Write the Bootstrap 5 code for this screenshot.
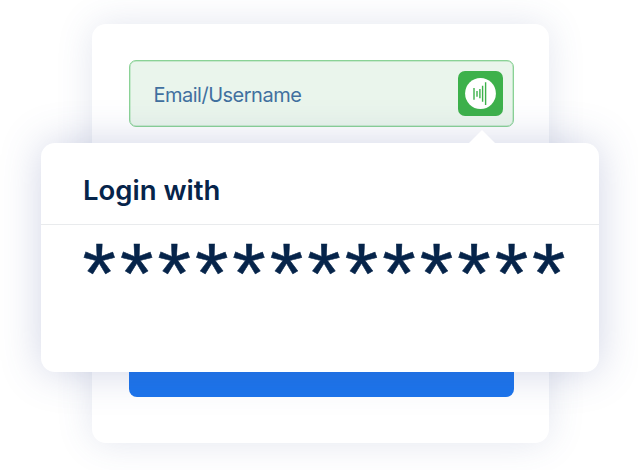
<!DOCTYPE html>
<html lang="en">
<head>
<meta charset="utf-8">
<meta name="viewport" content="width=device-width, initial-scale=1">
<title>Login</title>
<link href="https://cdn.jsdelivr.net/npm/bootstrap@5.3.0/dist/css/bootstrap.min.css" rel="stylesheet">
<style>
body { font-family: Inter, "Liberation Sans", sans-serif; height: 470px; overflow: hidden; padding: 24px 89.5px 0 92px; }
.login-panel { height: 419px; padding: 36px 35px 46px 36.5px; border-radius: 14px; box-shadow: 0 0 36px rgba(70,90,150,.15); }
.user-field { height: 67px; padding: 0 10px 0 24px; border: 1px solid #8ad296; box-shadow: inset 0 0 0 .5px #a5dcae; border-radius: 7px; background: #eaf5ec; }
.user-label { font-size: 20px; letter-spacing: -.5px; color: #41709f; line-height: 1; padding-top: 2px; }
.submit-btn { height: 60px; border: 0; border-radius: 8px; background: #1b74ec; }
.pass-popup { left: 40.5px; top: 142.5px; width: 558.5px; height: 229px; border-radius: 14px; box-shadow: 0 0 40px rgba(70,88,155,.25); color: #06244a; }
.pass-popup::before { content: ""; position: absolute; left: 427.5px; top: -13px; border: 14px solid transparent; border-top: 0; border-bottom: 14px solid #fff; }
.popup-title { height: 82px; padding: 16px 42px 0 42.5px; border-bottom: 1.5px solid #e9ebed; }
.popup-title h1 { font-size: 27.5px; font-weight: 600; letter-spacing: 0; line-height: 1; }
.masked { padding: 5px 0 0 42px; font: 400 86px/1 "Liberation Sans", sans-serif; letter-spacing: 4px; -webkit-text-stroke: .5px #06244a; }
</style>
</head>
<body class="bg-white">
<main class="login-panel bg-white d-flex flex-column justify-content-between">
  <div class="user-field d-flex align-items-center justify-content-between">
    <span class="user-label">Email/Username</span>
    <svg width="45" height="45" viewBox="0 0 45 45" role="img" aria-label="Autofill">
      <rect width="45" height="45" rx="7" fill="#3db14b"/>
      <circle cx="22.5" cy="22.5" r="15.4" fill="#fff"/>
      <path d="M16 17v11.7M19 20v5.8M21.9 18v9.3M24.6 14.8v16M27.6 11.3v22.8" stroke="#3db14b" stroke-width="1.4"/>
    </svg>
  </div>
  <button class="submit-btn w-100" type="submit" aria-label="Log in"></button>
</main>
<section class="pass-popup position-absolute bg-white">
  <div class="popup-title d-flex align-items-center"><h1 class="m-0">Login with</h1></div>
  <div class="masked text-nowrap">*************</div>
</section>
<script src="https://cdn.jsdelivr.net/npm/bootstrap@5.3.0/dist/js/bootstrap.bundle.min.js"></script>
</body>
</html>
